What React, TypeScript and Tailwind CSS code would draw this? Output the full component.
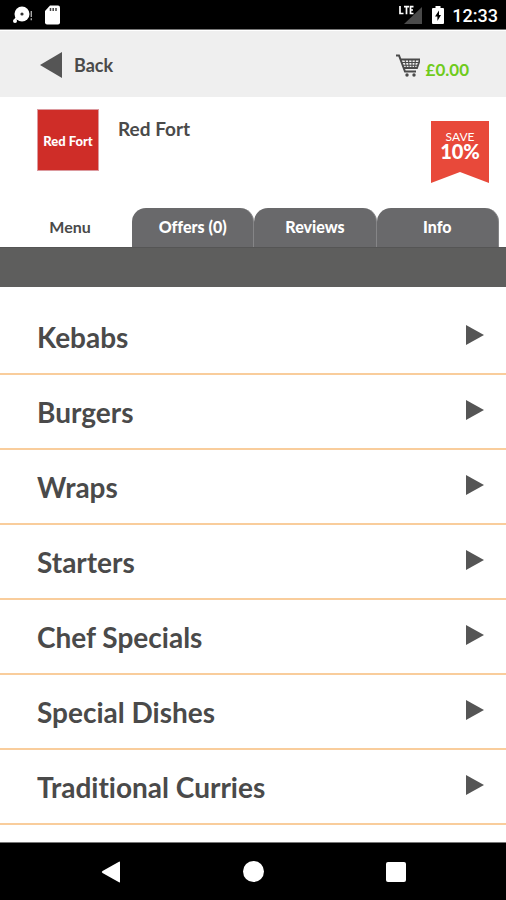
import { ReactNode } from 'react'

const categories = [
  'Kebabs',
  'Burgers',
  'Wraps',
  'Starters',
  'Chef Specials',
  'Special Dishes',
  'Traditional Curries',
]

const tabs = ['Offers (0)', 'Reviews', 'Info']

function StatusBar() {
  return (
    <div className="flex h-[30px] items-center justify-between border-b border-[#777777] bg-black pl-3 pr-2 text-white">
      <div className="flex items-center gap-3">
        <svg className="h-5 w-5" viewBox="0 0 20 20" fill="none">
          <circle cx="10" cy="9" r="7.5" fill="white" />
          <circle cx="10" cy="9" r="1.6" fill="#333333" />
          <path d="M5 12.500 2.800 15" stroke="white" strokeWidth="2" />
          <circle cx="3" cy="16" r="2" fill="white" />
          <path d="M19.300 6v6M19.300 13.200v2" stroke="#aaaaaa" strokeWidth="1.4" />
        </svg>
        <svg className="h-5 w-4" viewBox="0 0 16 20" fill="none">
          <path d="M6 .5h8a2 2 0 0 1 2 2v15a2 2 0 0 1-2 2H3a2 2 0 0 1-2-2V6z" fill="white" />
          <path d="M6.500 3v3M9.200 3v3M12 3v3" stroke="#444444" strokeWidth="1.5" />
        </svg>
      </div>
      <div className="flex items-center">
        <svg className="h-5 w-6" viewBox="0 0 24 20">
          <path d="M24 2v17H6z" fill="#4a4a4a" />
          <path d="M2 1v7.500h3.500M6 1.700h5M8.500 1.700v7.500M15.500 1.700h-3v6.800h3M12.500 5h2.500" stroke="white" strokeWidth="1.7" fill="none" />
        </svg>
        <svg className="ml-2.5 h-5 w-3" viewBox="0 0 12 20">
          <path d="M3.500 1h5v2H11a1 1 0 0 1 1 1v14a1 1 0 0 1-1 1H1a1 1 0 0 1-1-1V4a1 1 0 0 1 1-1h2.500z" fill="white" />
          <path d="M7 5.500 3 11.500h2.400v4.500L9 10H7z" fill="black" />
        </svg>
        <span className="ml-2 pt-0.5 font-['Roboto',sans-serif] text-lg font-medium leading-5">12:33</span>
      </div>
    </div>
  )
}

function CartIcon() {
  return (
    <svg className="h-6 w-6" viewBox="0 0 24 24" fill="none" stroke="#4a4a4a">
      <path d="M0 1.500h3L9 17.500h11" strokeWidth="2" />
      <path d="M4.500 5.500H24L21 14H8" strokeWidth="1.8" />
      <path d="M5.500 8.500H23M6.500 11.300H22M9 5.500l1.500 8.500M12.500 5.500l.7 8.500M16 5.500V14M19.500 5.500l-1 8.500" strokeWidth="1.1" />
      <circle cx="11" cy="21" r="1.700" fill="#4a4a4a" stroke="none" />
      <circle cx="18" cy="21" r="1.700" fill="#4a4a4a" stroke="none" />
    </svg>
  )
}

function Header() {
  return (
    <header className="flex h-[67px] items-center justify-between border-t border-white bg-[#efefef] pl-10 pr-[37px]">
      <button className="flex items-center gap-3 pt-0.5 text-lg font-bold leading-6 text-[#4a4a4a]">
        <svg className="h-[26px] w-[22px]" viewBox="0 0 22 26">
          <path d="M0 13 22 0v26z" fill="#555555" />
        </svg>
        Back
      </button>
      <a href="#basket" className="flex items-start gap-1.5 pt-2 text-[17px] font-bold leading-6 text-[#6fcb1c]">
        <CartIcon />
        <span className="pt-1">£0.00</span>
      </a>
    </header>
  )
}

function Restaurant() {
  return (
    <section className="flex h-[111px] items-start pl-[37px] pr-[17px] pt-3">
      <div className="flex h-[62px] w-[62px] items-center justify-center border border-[#dc9a9f] bg-[#cf2d28] pt-1 text-[13px] font-black text-white">
        Red Fort
      </div>
      <h1 className="ml-[19px] flex-1 pt-2 text-[19px] font-bold leading-6 text-[#4a4a4a]">Red Fort</h1>
      <div className="relative mt-3 h-[62px] w-[58px] text-center text-white">
        <svg className="absolute inset-0 h-full w-full" viewBox="0 0 58 62">
          <path d="M0 0h58v62L29 51 0 62z" fill="#e8493a" />
        </svg>
        <p className="relative pt-2.5 text-xs leading-3">SAVE</p>
        <p className="relative text-xl font-black leading-4">10%</p>
      </div>
    </section>
  )
}

function Tab({ active, children }: { active?: boolean; children: ReactNode }) {
  return (
    <button
      role="tab"
      aria-selected={!!active}
      className={
        active
          ? 'w-[132px] pb-0.5 pl-2 text-base font-bold text-[#4a4a4a]'
          : 'flex-1 rounded-t-[14px] border-r border-[#858587] bg-[#69696b] pb-0.5 text-base font-black text-white'
      }
    >
      {children}
    </button>
  )
}

export default function App() {
  return (
    <div className="flex min-h-screen flex-col bg-white font-['Lato',sans-serif] [font-variant-ligatures:none]">
      <StatusBar />
      <Header />
      <Restaurant />

      <div role="tablist" className="flex h-[39px] pr-[7px]">
        <Tab active>Menu</Tab>
        {tabs.map((tab) => (
          <Tab key={tab}>{tab}</Tab>
        ))}
      </div>
      <div className="h-10 border-t border-[#555555] bg-[#5e5e5d]" />

      <main className="flex-1 pt-[13px]">
        <ul>
          {categories.map((category) => (
            <li key={category} className="border-b-2 border-[#f9cd9c]">
              <button className="flex h-[73px] w-full items-center justify-between pl-[37px] pr-[22px] text-[28px] font-bold leading-8 text-[#4a4a4a]">
                {category}
                <svg className="mb-1 h-5 w-[18px]" viewBox="0 0 18 20">
                  <path d="M0 0 18 10 0 20z" fill="#555555" />
                </svg>
              </button>
            </li>
          ))}
        </ul>
      </main>

      <nav className="flex h-[58px] items-center justify-between border-t border-[#777777] bg-black px-[100px]">
        <button aria-label="Back">
          <svg className="h-[22px] w-5" viewBox="0 0 20 22">
            <path d="M2.500 10 19 .7q1-.5 1 .5v19.600q0 1-1 .5L2.500 12q-1.500-1 0-2z" fill="white" />
          </svg>
        </button>
        <button aria-label="Home" className="h-[21px] w-[21px] rounded-full bg-white" />
        <button aria-label="Recent apps" className="h-5 w-5 rounded-xs bg-white" />
      </nav>
    </div>
  )
}
